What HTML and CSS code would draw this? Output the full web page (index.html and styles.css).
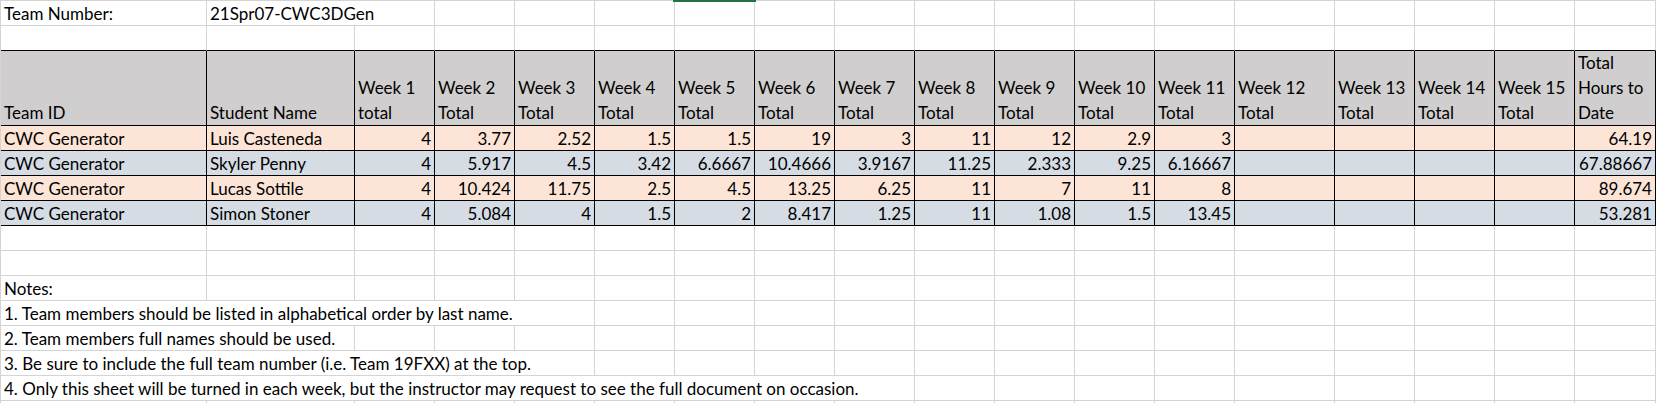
FILE: index.html
```html
<!DOCTYPE html>
<html lang="en">
<head>
<meta charset="utf-8">
<title>Team Hours</title>
<link rel="stylesheet" href="styles.css">
</head>
<body>
<div class="sheet">
  <div class="sel"></div>

  <!-- row 1 -->
  <div class="c">Team Number:</div>
  <div class="c s2">21Spr07-CWC3DGen</div>
  <div class="c"></div><div class="c"></div><div class="c"></div><div class="c"></div><div class="c"></div>
  <div class="c"></div><div class="c"></div><div class="c"></div><div class="c"></div><div class="c"></div>
  <div class="c"></div><div class="c"></div><div class="c"></div><div class="c"></div><div class="c"></div>

  <!-- row 2 -->
  <div class="c t"></div><div class="c t"></div><div class="c t"></div><div class="c t"></div><div class="c t"></div><div class="c t"></div>
  <div class="c t"></div><div class="c t"></div><div class="c t"></div><div class="c t"></div><div class="c t"></div><div class="c t"></div>
  <div class="c t"></div><div class="c t"></div><div class="c t"></div><div class="c t"></div><div class="c t"></div><div class="c t"></div>

  <!-- header -->
  <div class="h">Team ID</div>
  <div class="h">Student Name</div>
  <div class="h"><span>Week 1<br>total</span></div>
  <div class="h"><span>Week 2<br>Total</span></div>
  <div class="h"><span>Week 3<br>Total</span></div>
  <div class="h"><span>Week 4<br>Total</span></div>
  <div class="h"><span>Week 5<br>Total</span></div>
  <div class="h"><span>Week 6<br>Total</span></div>
  <div class="h"><span>Week 7<br>Total</span></div>
  <div class="h"><span>Week 8<br>Total</span></div>
  <div class="h"><span>Week 9<br>Total</span></div>
  <div class="h"><span>Week 10<br>Total</span></div>
  <div class="h"><span>Week 11<br>Total</span></div>
  <div class="h"><span>Week 12<br>Total</span></div>
  <div class="h"><span>Week 13<br>Total</span></div>
  <div class="h"><span>Week 14<br>Total</span></div>
  <div class="h"><span>Week 15<br>Total</span></div>
  <div class="h"><span>Total<br>Hours to<br>Date</span></div>

  <!-- data row 1 -->
  <div class="d pe">CWC Generator</div>
  <div class="d pe">Luis Casteneda</div>
  <div class="d pe n">4</div>
  <div class="d pe n">3.77</div>
  <div class="d pe n">2.52</div>
  <div class="d pe n">1.5</div>
  <div class="d pe n">1.5</div>
  <div class="d pe n">19</div>
  <div class="d pe n">3</div>
  <div class="d pe n">11</div>
  <div class="d pe n">12</div>
  <div class="d pe n">2.9</div>
  <div class="d pe n">3</div>
  <div class="d pe"></div>
  <div class="d pe"></div>
  <div class="d pe"></div>
  <div class="d pe"></div>
  <div class="d pe n">64.19</div>

  <!-- data row 2 -->
  <div class="d bg">CWC Generator</div>
  <div class="d bg">Skyler Penny</div>
  <div class="d bg n">4</div>
  <div class="d bg n">5.917</div>
  <div class="d bg n">4.5</div>
  <div class="d bg n">3.42</div>
  <div class="d bg n">6.6667</div>
  <div class="d bg n">10.4666</div>
  <div class="d bg n">3.9167</div>
  <div class="d bg n">11.25</div>
  <div class="d bg n">2.333</div>
  <div class="d bg n">9.25</div>
  <div class="d bg n">6.16667</div>
  <div class="d bg"></div>
  <div class="d bg"></div>
  <div class="d bg"></div>
  <div class="d bg"></div>
  <div class="d bg n">67.88667</div>

  <!-- data row 3 -->
  <div class="d pe">CWC Generator</div>
  <div class="d pe">Lucas Sottile</div>
  <div class="d pe n">4</div>
  <div class="d pe n">10.424</div>
  <div class="d pe n">11.75</div>
  <div class="d pe n">2.5</div>
  <div class="d pe n">4.5</div>
  <div class="d pe n">13.25</div>
  <div class="d pe n">6.25</div>
  <div class="d pe n">11</div>
  <div class="d pe n">7</div>
  <div class="d pe n">11</div>
  <div class="d pe n">8</div>
  <div class="d pe"></div>
  <div class="d pe"></div>
  <div class="d pe"></div>
  <div class="d pe"></div>
  <div class="d pe n">89.674</div>

  <!-- data row 4 -->
  <div class="d bg">CWC Generator</div>
  <div class="d bg">Simon Stoner</div>
  <div class="d bg n">4</div>
  <div class="d bg n">5.084</div>
  <div class="d bg n">4</div>
  <div class="d bg n">1.5</div>
  <div class="d bg n">2</div>
  <div class="d bg n">8.417</div>
  <div class="d bg n">1.25</div>
  <div class="d bg n">11</div>
  <div class="d bg n">1.08</div>
  <div class="d bg n">1.5</div>
  <div class="d bg n">13.45</div>
  <div class="d bg"></div>
  <div class="d bg"></div>
  <div class="d bg"></div>
  <div class="d bg"></div>
  <div class="d bg n">53.281</div>

  <!-- row 8 -->
  <div class="c"></div><div class="c"></div><div class="c"></div><div class="c"></div><div class="c"></div><div class="c"></div>
  <div class="c"></div><div class="c"></div><div class="c"></div><div class="c"></div><div class="c"></div><div class="c"></div>
  <div class="c"></div><div class="c"></div><div class="c"></div><div class="c"></div><div class="c"></div><div class="c"></div>

  <!-- row 9 -->
  <div class="c"></div><div class="c"></div><div class="c"></div><div class="c"></div><div class="c"></div><div class="c"></div>
  <div class="c"></div><div class="c"></div><div class="c"></div><div class="c"></div><div class="c"></div><div class="c"></div>
  <div class="c"></div><div class="c"></div><div class="c"></div><div class="c"></div><div class="c"></div><div class="c"></div>

  <!-- row 10 -->
  <div class="c">Notes:</div>
  <div class="c"></div><div class="c"></div><div class="c"></div><div class="c"></div><div class="c"></div><div class="c"></div>
  <div class="c"></div><div class="c"></div><div class="c"></div><div class="c"></div><div class="c"></div><div class="c"></div>
  <div class="c"></div><div class="c"></div><div class="c"></div><div class="c"></div><div class="c"></div>

  <!-- row 11 -->
  <div class="c s5">1. Team members should be listed in alphabetical order by last name.</div>
  <div class="c"></div><div class="c"></div><div class="c"></div><div class="c"></div><div class="c"></div>
  <div class="c"></div><div class="c"></div><div class="c"></div><div class="c"></div><div class="c"></div>
  <div class="c"></div><div class="c"></div><div class="c"></div>

  <!-- row 12 -->
  <div class="c s2">2. Team members full names should be used.</div>
  <div class="c"></div><div class="c"></div><div class="c"></div><div class="c"></div><div class="c"></div><div class="c"></div>
  <div class="c"></div><div class="c"></div><div class="c"></div><div class="c"></div><div class="c"></div><div class="c"></div>
  <div class="c"></div><div class="c"></div><div class="c"></div><div class="c"></div>

  <!-- row 13 -->
  <div class="c s5">3. Be sure to include the full team number (i.e. Team 19FXX) at the top.</div>
  <div class="c"></div><div class="c"></div><div class="c"></div><div class="c"></div><div class="c"></div>
  <div class="c"></div><div class="c"></div><div class="c"></div><div class="c"></div><div class="c"></div>
  <div class="c"></div><div class="c"></div><div class="c"></div>

  <!-- row 14 -->
  <div class="c s9">4. Only this sheet will be turned in each week, but the instructor may request to see the full document on occasion.</div>
  <div class="c"></div><div class="c"></div><div class="c"></div><div class="c"></div><div class="c"></div>
  <div class="c"></div><div class="c"></div><div class="c"></div><div class="c"></div>

  <!-- row 15 -->
  <div class="c"></div><div class="c"></div><div class="c"></div><div class="c"></div><div class="c"></div><div class="c"></div>
  <div class="c"></div><div class="c"></div><div class="c"></div><div class="c"></div><div class="c"></div><div class="c"></div>
  <div class="c"></div><div class="c"></div><div class="c"></div><div class="c"></div><div class="c"></div><div class="c"></div>
</div>
</body>
</html>
```

FILE: styles.css
```css
html, body {
  margin: 0;
  padding: 0;
  background: #ffffff;
  overflow: hidden;
}

.sheet {
  position: relative;
  display: grid;
  grid-template-columns: 206px 148px repeat(11, 80px) 100px repeat(3, 80px) 81px;
  grid-template-rows: 25px 25px 75px;
  grid-auto-rows: 25px;
  border-top: 1px solid #d4d4d4;
  border-left: 1px solid #d4d4d4;
  font-family: "Lato", "Liberation Sans", sans-serif;
  font-size: 17px;
  color: #000000;
  width: 1655px;
}

.sel {
  position: absolute;
  top: -1px;
  left: 672px;
  width: 83px;
  height: 2px;
  background: #217346;
}

.c, .h, .d {
  box-sizing: border-box;
  display: flex;
  align-items: flex-end;
  padding: 0 3px;
  white-space: nowrap;
  min-width: 0;
}

.c {
  border-right: 1px solid #d4d4d4;
  border-bottom: 1px solid #d4d4d4;
  line-height: 22px;
}

.c.t {
  border-bottom-color: #000000;
}

.s2 { grid-column: span 2; }
.s5 { grid-column: span 5; }
.s9 { grid-column: span 9; }

.h {
  background: #d0cece;
  border-right: 1px solid #000000;
  border-bottom: 1px solid #000000;
  line-height: 25px;
}

.d {
  border-right: 1px solid #000000;
  border-bottom: 1px solid #000000;
  line-height: 22px;
}

.pe { background: #fce4d6; }
.bg { background: #d6dce4; }

.n {
  justify-content: flex-end;
}
```
